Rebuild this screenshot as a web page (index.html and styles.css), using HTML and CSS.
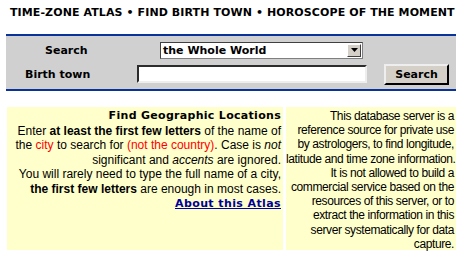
FILE: index.html
```html
<!DOCTYPE html>
<html lang="en">
<head>
  <meta charset="UTF-8">
  <title>Time-Zone Atlas</title>
  <link rel="stylesheet" href="styles.css">
</head>
<body>
  <!-- Top title -->
  <div class="site-title">TIME-ZONE ATLAS &bull; FIND BIRTH TOWN &bull; HOROSCOPE OF THE MOMENT</div>

  <!-- Search form -->
  <form class="search-panel">
    <div class="row">
      <label class="lbl lbl-search">Search</label>
      <div class="select-box">
        <span>the Whole World</span>
        <span class="arrow"><svg width="7" height="4" viewBox="0 0 7 4"><path d="M0 0h7L3.5 4z" fill="#000"/></svg></span>
      </div>
    </div>
    <div class="row">
      <label class="lbl lbl-town">Birth town</label>
      <input class="town-input" type="text">
      <button type="button" class="btn">Search</button>
    </div>
  </form>

  <!-- Info boxes -->
  <div class="info">
    <div class="box box-left">
      <div class="box-title">Find Geographic Locations</div>
      Enter <b>at least the first few letters</b> of the name of<br>
      the <span class="red">city</span> to search for <span class="red">(not the country)</span>. Case is <i>not</i><br>
      significant and <i>accents</i> are ignored.<br>
      You will rarely need to type the full name of a city,<br>
      <b>the first few letters</b> are enough in most cases.<br>
      <a href="#" class="about">About this Atlas</a>
    </div>
    <div class="box box-right">
      This database server is a<br>
      reference source for private use<br>
      by astrologers, to find longitude,<br>
      latitude and time zone information.<br>
      It is not allowed to build a<br>
      commercial service based on the<br>
      resources of this server, or to<br>
      extract the information in this<br>
      server systematically for data<br>
      capture.
    </div>
  </div>
</body>
</html>
```

FILE: styles.css
```css
/* Basic Reset */
* {
    box-sizing: border-box;
    margin: 0;
    padding: 0;
}

body {
    width: 462px;
    height: 257px;
    background: #fff;
    font-family: 'DejaVu Sans', Verdana, sans-serif;
    overflow: hidden;
}

/* Title */
.site-title {
    padding: 6px 0 0 10px;
    height: 34px;
    font-size: 11px;
    letter-spacing: 0.1px;
    font-weight: bold;
    color: #000;
    white-space: nowrap;
}

/* Search panel */
.search-panel {
    margin: 0 6px;
    width: 450px;
    height: 57px;
    background: #d0d0d0;
    border-top: 2px solid #0a3399;
    border-bottom: 2px solid #0a3399;
    padding-top: 2px;
}

.row {
    display: flex;
    align-items: center;
    height: 24px;
}

.lbl {
    font-size: 11px;
    font-weight: bold;
    color: #000;
}

.lbl-search {
    width: 154px;
    padding-left: 39px;
}

.lbl-town {
    width: 131px;
    padding-left: 19px;
}

.select-box {
    width: 203px;
    height: 17px;
    background: #fff;
    border: 1px solid #7f7f7f;
    border-top-color: #404040;
    border-left-color: #404040;
    display: flex;
    align-items: center;
    justify-content: space-between;
    font-size: 11px;
    font-weight: bold;
    padding-left: 2px;
}

.arrow {
    width: 14px;
    height: 13px;
    margin-right: 1px;
    background: #d4d0c8;
    border: 1px solid #fff;
    border-right-color: #404040;
    border-bottom-color: #404040;
    display: flex;
    align-items: center;
    justify-content: center;
}

.town-input {
    width: 230px;
    height: 18px;
    border: 2px inset #eee;
    border-top-color: #808080;
    border-left-color: #808080;
    background: #fff;
}

.btn {
    margin-left: 17px;
    width: 65px;
    height: 21px;
    background: #d4d0c8;
    border: 2px outset #eee;
    border-right-color: #404040;
    border-bottom-color: #404040;
    font-family: 'DejaVu Sans', Verdana, sans-serif;
    font-size: 11px;
    font-weight: bold;
    color: #000;
    margin-top: 1px;
}

/* Info boxes */
.info {
    display: flex;
    gap: 3px;
    margin: 16px 6px 0 7px;
    height: 143px;
}

.box {
    background: #ffffcc;
    font-family: 'Liberation Sans', Arial, sans-serif;
    font-size: 12px;
    line-height: 14.5px;
    text-align: right;
    color: #000;
    white-space: nowrap;
}

.box-left {
    width: 276px;
    padding: 2px 2px 0 4px;
}

.box-right {
    width: 170px;
    padding: 2px 2px 0 0;
    letter-spacing: -0.4px;
    line-height: 14.2px;
}

.box-title {
    font-family: 'DejaVu Sans', Verdana, sans-serif;
    font-weight: bold;
    font-size: 11px;
    letter-spacing: 0.3px;
}

.red {
    color: #ff0000;
}

.about {
    font-family: 'DejaVu Sans', Verdana, sans-serif;
    font-weight: bold;
    font-size: 11px;
    letter-spacing: 0.4px;
    color: #00009c;
}
```
